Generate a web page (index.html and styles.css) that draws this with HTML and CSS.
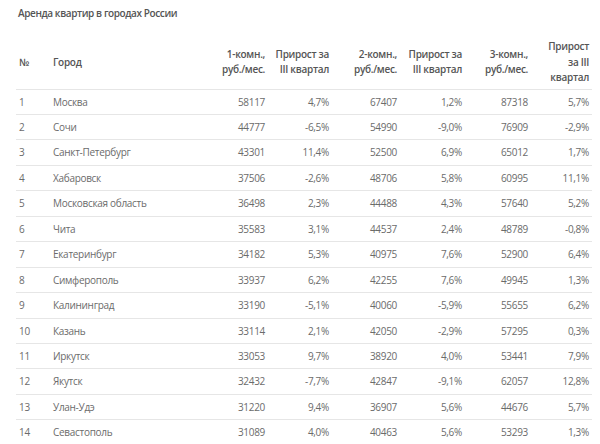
FILE: index.html
```html
<!DOCTYPE html>
<html lang="ru">
<head>
<meta charset="utf-8">
<link rel="stylesheet" href="styles.css">
</head>
<body>
<div class="wrap">
  <h1 class="title">Аренда квартир в городах России</h1>
  <table class="rent">
    <colgroup>
      <col class="c-num"><col class="c-city"><col class="c-p1"><col class="c-g1"><col class="c-p2"><col class="c-g2"><col class="c-p3"><col class="c-g3">
    </colgroup>
    <thead>
      <tr>
        <th class="left">№</th>
        <th class="left">Город</th>
        <th>1-комн.,<br>руб./мес.</th>
        <th>Прирост за<br>III квартал</th>
        <th>2-комн.,<br>руб./мес.</th>
        <th>Прирост за<br>III квартал</th>
        <th>3-комн.,<br>руб./мес.</th>
        <th>Прирост<br>за III<br>квартал</th>
      </tr>
    </thead>
    <tbody>
      <tr><td class="left">1</td><td class="left">Москва</td><td>58117</td><td>4,7%</td><td>67407</td><td>1,2%</td><td>87318</td><td>5,7%</td></tr>
      <tr><td class="left">2</td><td class="left">Сочи</td><td>44777</td><td>-6,5%</td><td>54990</td><td>-9,0%</td><td>76909</td><td>-2,9%</td></tr>
      <tr><td class="left">3</td><td class="left">Санкт-Петербург</td><td>43301</td><td>11,4%</td><td>52500</td><td>6,9%</td><td>65012</td><td>1,7%</td></tr>
      <tr><td class="left">4</td><td class="left">Хабаровск</td><td>37506</td><td>-2,6%</td><td>48706</td><td>5,8%</td><td>60995</td><td>11,1%</td></tr>
      <tr><td class="left">5</td><td class="left">Московская область</td><td>36498</td><td>2,3%</td><td>44488</td><td>4,3%</td><td>57640</td><td>5,2%</td></tr>
      <tr><td class="left">6</td><td class="left">Чита</td><td>35583</td><td>3,1%</td><td>44537</td><td>2,4%</td><td>48789</td><td>-0,8%</td></tr>
      <tr><td class="left">7</td><td class="left">Екатеринбург</td><td>34182</td><td>5,3%</td><td>40975</td><td>7,6%</td><td>52900</td><td>6,4%</td></tr>
      <tr><td class="left">8</td><td class="left">Симферополь</td><td>33937</td><td>6,2%</td><td>42255</td><td>7,6%</td><td>49945</td><td>1,3%</td></tr>
      <tr><td class="left">9</td><td class="left">Калининград</td><td>33190</td><td>-5,1%</td><td>40060</td><td>-5,9%</td><td>55655</td><td>6,2%</td></tr>
      <tr><td class="left">10</td><td class="left">Казань</td><td>33114</td><td>2,1%</td><td>42050</td><td>-2,9%</td><td>57295</td><td>0,3%</td></tr>
      <tr><td class="left">11</td><td class="left">Иркутск</td><td>33053</td><td>9,7%</td><td>38920</td><td>4,0%</td><td>53441</td><td>7,9%</td></tr>
      <tr><td class="left">12</td><td class="left">Якутск</td><td>32432</td><td>-7,7%</td><td>42847</td><td>-9,1%</td><td>62057</td><td>12,8%</td></tr>
      <tr><td class="left">13</td><td class="left">Улан-Удэ</td><td>31220</td><td>9,4%</td><td>36907</td><td>5,6%</td><td>44676</td><td>5,7%</td></tr>
      <tr><td class="left">14</td><td class="left">Севастополь</td><td>31089</td><td>4,0%</td><td>40463</td><td>5,6%</td><td>53293</td><td>1,3%</td></tr>
    </tbody>
  </table>
</div>
</body>
</html>
```
FILE: styles.css
```css
html, body {
  margin: 0;
  padding: 0;
  background: #ffffff;
}
body {
  font-family: "Open Sans", "Noto Sans", sans-serif;
  font-size: 10px;
  letter-spacing: -0.3px;
  color: #6b6b6b;
}
.wrap {
  padding: 4px 8px 0 16px;
}
.title {
  margin: 0 0 0 2px;
  font-size: 10px;
  line-height: 18px;
  font-weight: 600;
  letter-spacing: -0.4px;
  color: #555555;
}
.rent {
  margin-top: 14px;
  border-collapse: collapse;
  table-layout: fixed;
  width: 576px;
}
.c-num { width: 34px; }
.c-city { width: 150px; }
.c-p1 { width: 68px; }
.c-g1 { width: 64px; }
.c-p2 { width: 68px; }
.c-g2 { width: 65px; }
.c-p3 { width: 66px; }
.c-g3 { width: 61px; }
.rent th, .rent td {
  text-align: right;
  vertical-align: middle;
  white-space: nowrap;
}
.rent th {
  padding: 3px 3px;
  line-height: 15.5px;
  font-weight: 600;
  color: #555555;
}
.rent td {
  padding: 4px 3px;
  line-height: 16.46px;
  border-top: 1px solid #e6e6e6;
}
.rent .left {
  text-align: left;
}
```
